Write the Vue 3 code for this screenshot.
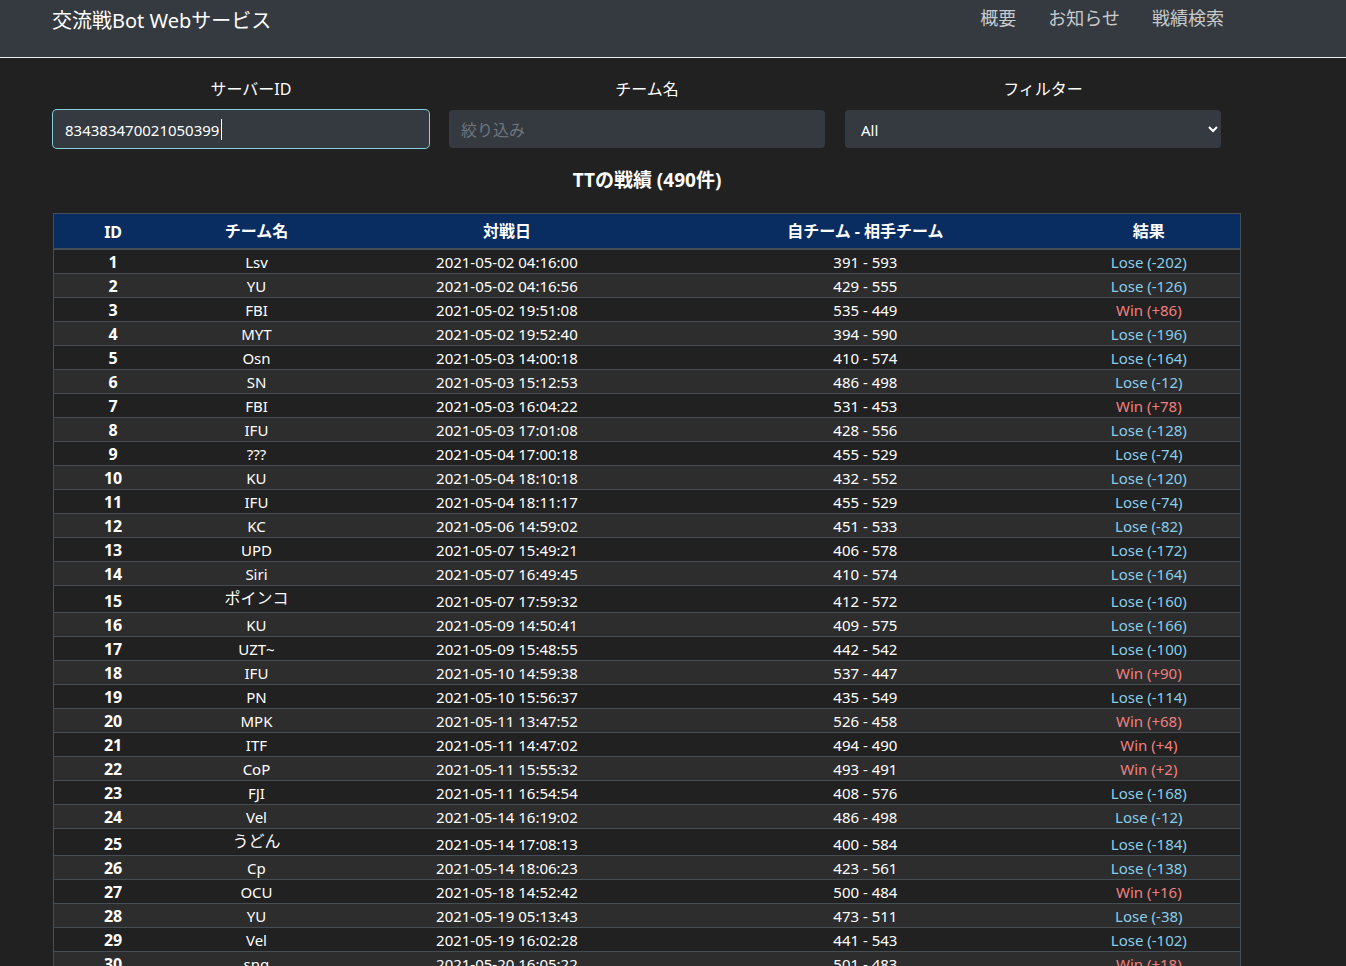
<script setup>
import { ref } from 'vue'

const serverId = ref('834383470021050399')
const team = ref('')
const filter = ref('All')

const rows = [
  ['Lsv', '2021-05-02 04:16:00', 391, 593],
  ['YU', '2021-05-02 04:16:56', 429, 555],
  ['FBI', '2021-05-02 19:51:08', 535, 449],
  ['MYT', '2021-05-02 19:52:40', 394, 590],
  ['Osn', '2021-05-03 14:00:18', 410, 574],
  ['SN', '2021-05-03 15:12:53', 486, 498],
  ['FBI', '2021-05-03 16:04:22', 531, 453],
  ['IFU', '2021-05-03 17:01:08', 428, 556],
  ['???', '2021-05-04 17:00:18', 455, 529],
  ['KU', '2021-05-04 18:10:18', 432, 552],
  ['IFU', '2021-05-04 18:11:17', 455, 529],
  ['KC', '2021-05-06 14:59:02', 451, 533],
  ['UPD', '2021-05-07 15:49:21', 406, 578],
  ['Siri', '2021-05-07 16:49:45', 410, 574],
  ['ポインコ', '2021-05-07 17:59:32', 412, 572],
  ['KU', '2021-05-09 14:50:41', 409, 575],
  ['UZT~', '2021-05-09 15:48:55', 442, 542],
  ['IFU', '2021-05-10 14:59:38', 537, 447],
  ['PN', '2021-05-10 15:56:37', 435, 549],
  ['MPK', '2021-05-11 13:47:52', 526, 458],
  ['ITF', '2021-05-11 14:47:02', 494, 490],
  ['CoP', '2021-05-11 15:55:32', 493, 491],
  ['FJI', '2021-05-11 16:54:54', 408, 576],
  ['Vel', '2021-05-14 16:19:02', 486, 498],
  ['うどん', '2021-05-14 17:08:13', 400, 584],
  ['Cp', '2021-05-14 18:06:23', 423, 561],
  ['OCU', '2021-05-18 14:52:42', 500, 484],
  ['YU', '2021-05-19 05:13:43', 473, 511],
  ['Vel', '2021-05-19 16:02:28', 441, 543],
  ['snq', '2021-05-20 16:05:22', 501, 483],
].map(([name, date, own, enemy], i) => {
  const diff = own - enemy
  return {
    id: i + 1,
    name,
    date,
    score: `${own} - ${enemy}`,
    win: diff > 0,
    result: diff > 0 ? `Win (+${diff})` : `Lose (${diff})`,
    kana: /[^\x00-\x7f]/.test(name),
  }
})
</script>

<template>
  <div class="page">
    <header class="navbar">
      <a class="brand" href="#">交流戦Bot Webサービス</a>
      <nav class="links">
        <a href="#about">概要</a>
        <a href="#news">お知らせ</a>
        <a href="#search">戦績検索</a>
      </nav>
    </header>

    <main class="content">
      <form class="filters" @submit.prevent>
        <div class="field">
          <label for="server">サーバーID</label>
          <div class="box">
            <input id="server" v-model="serverId" class="control active" type="text" />
            <span class="caret"></span>
          </div>
        </div>
        <div class="field">
          <label for="team">チーム名</label>
          <input id="team" v-model="team" class="control" type="text" placeholder="絞り込み" />
        </div>
        <div class="field">
          <label for="filter">フィルター</label>
          <select id="filter" v-model="filter" class="control">
            <option>All</option>
            <option>Win</option>
            <option>Lose</option>
          </select>
        </div>
      </form>

      <h1>TTの戦績 (490件)</h1>

      <table>
        <colgroup>
          <col class="c-id" />
          <col class="c-team" />
          <col class="c-date" />
          <col class="c-score" />
          <col class="c-result" />
        </colgroup>
        <thead>
          <tr>
            <th scope="col" class="latin">ID</th>
            <th scope="col">チーム名</th>
            <th scope="col">対戦日</th>
            <th scope="col">自チーム - 相手チーム</th>
            <th scope="col">結果</th>
          </tr>
        </thead>
        <tbody>
          <tr v-for="r in rows" :key="r.id" :class="{ tall: r.kana }">
            <th scope="row">{{ r.id }}</th>
            <td :class="{ kana: r.kana }">{{ r.name }}</td>
            <td>{{ r.date }}</td>
            <td>{{ r.score }}</td>
            <td :class="r.win ? 'win' : 'lose'">{{ r.result }}</td>
          </tr>
        </tbody>
      </table>
    </main>
  </div>
</template>

<style>
body {
  margin: 0;
  background: #212121;
}
</style>

<style scoped>
.page {
  height: 100vh;
  overflow: hidden;
  background: #212121;
  color: #fff;
  font-family: "Noto Sans", "Noto Sans CJK JP", sans-serif;
  font-size: 15px;
  line-height: 22px;
}
.navbar {
  display: flex;
  justify-content: space-between;
  align-items: flex-start;
  box-sizing: border-box;
  height: 58px;
  padding: 4px 122px 0 52px;
  background: #343a40;
  border-bottom: 1px solid #f0f0f0;
}
.navbar a {
  text-decoration: none;
}
.brand {
  color: #fff;
  font-size: 20px;
  line-height: 34px;
}
.links {
  display: flex;
  gap: 32px;
}
.links a {
  color: #c8cacc;
  font-size: 18px;
  line-height: 28px;
}
.content {
  padding: 0 105px 0 53px;
}
.filters {
  display: grid;
  grid-template-columns: repeat(3, 1fr);
  padding-top: 20px;
}
.field {
  display: flex;
  flex-direction: column;
}
.field label {
  margin-bottom: 10px;
  font-size: 16px;
  line-height: 22px;
  text-align: center;
}
.box {
  position: relative;
}
.control {
  display: block;
  box-sizing: border-box;
  width: calc(100% - 20px);
  height: 38px;
  padding: 8px 12px 6px;
  border: 0;
  border-radius: 4px;
  outline: 0;
  background: #343a40;
  color: #fff;
  font-family: inherit;
  font-size: 15px;
}
.control::placeholder {
  color: #6c757d;
  font-size: 16px;
}
.control.active {
  box-shadow: 0 0 0 1px #87cedf;
}
.caret {
  position: absolute;
  top: 9px;
  left: 168px;
  width: 1px;
  height: 21px;
  background: #fff;
}
h1 {
  margin: 18px 0 19px;
  font-size: 19px;
  font-weight: 700;
  line-height: 28px;
  text-align: center;
}
table {
  width: 100%;
  table-layout: fixed;
  border-collapse: collapse;
  border: 1px solid #454d55;
  text-align: center;
}
.c-id { width: 10%; }
.c-team { width: 14.2%; }
.c-date { width: 28%; }
.c-score { width: 32.4%; }
.c-result { width: 15.4%; }
th,
td {
  padding: 1px 0 0;
  border-top: 1px solid #454d55;
}
th {
  font-size: 16px;
  font-weight: 700;
}
thead th {
  height: 35px;
  padding: 0;
  box-sizing: border-box;
  border-bottom: 2px solid #454d55;
  background: #092c61;
}
thead .latin {
  padding: 2px 0 0;
}
tbody tr:nth-child(even) {
  background: #2d2d2d;
}
.tall > * {
  padding-top: 4px;
}
.tall .kana {
  padding: 1px 0 3px;
  font-size: 16px;
}
.lose { color: #87ceeb; }
.win { color: #f08080; }
</style>
